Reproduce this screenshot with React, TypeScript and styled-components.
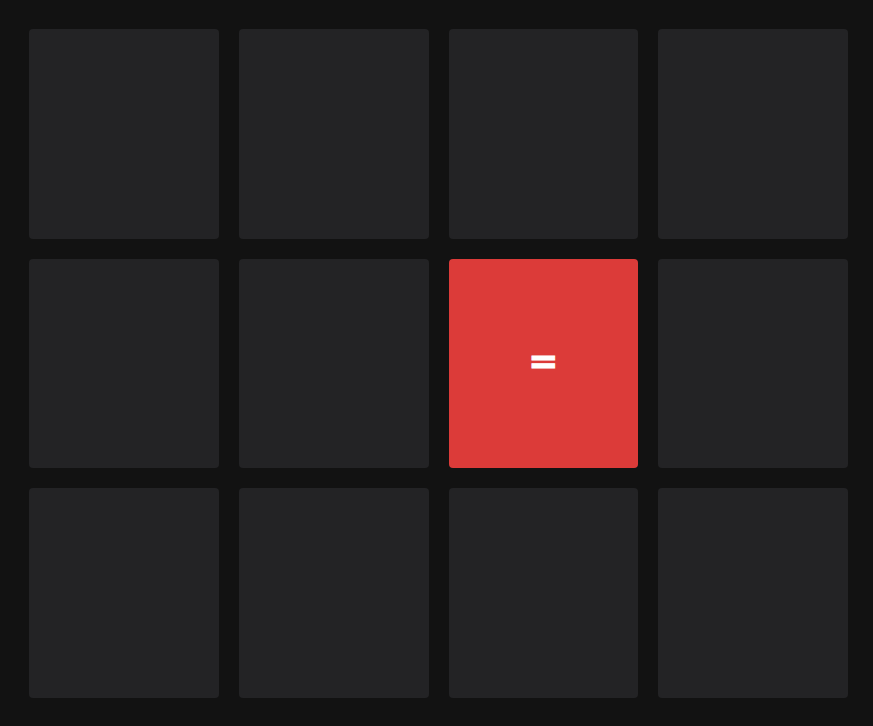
import React from "react";
import styled, { createGlobalStyle } from "styled-components";

const GlobalStyle = createGlobalStyle`
  html, body {
    margin: 0;
    padding: 0;
    background: #121212;
  }
  #root {
    min-height: 100vh;
  }
`;

const Page = styled.div`
  box-sizing: border-box;
  width: 873px;
  height: 726px;
  padding: 29px 25px 28px 29px;
  background: #121212;
`;

const Board = styled.div`
  display: grid;
  grid-template-columns: repeat(4, 1fr);
  grid-template-rows: repeat(3, 1fr);
  gap: 20px;
  height: 100%;
`;

const Tile = styled.div<{ $active?: boolean }>`
  display: flex;
  align-items: center;
  justify-content: center;
  box-sizing: border-box;
  padding-bottom: 4px;
  border-radius: 4px;
  background: ${(p) => (p.$active ? "#dc3b39" : "#232325")};
  color: #ffffff;
  font-family: "DejaVu Sans", "Liberation Sans", sans-serif;
  font-weight: 700;
  font-size: 36px;
  line-height: 1;
  -webkit-text-stroke: 1px #ffffff;
  user-select: none;
`;

const tiles = Array.from({ length: 12 }, (_, i) => i);

export default function App() {
  return (
    <>
      <GlobalStyle />
      <Page>
        <Board>
          {tiles.map((i) => (
            <Tile key={i} $active={i === 6}>
              {i === 6 ? "=" : null}
            </Tile>
          ))}
        </Board>
      </Page>
    </>
  );
}
